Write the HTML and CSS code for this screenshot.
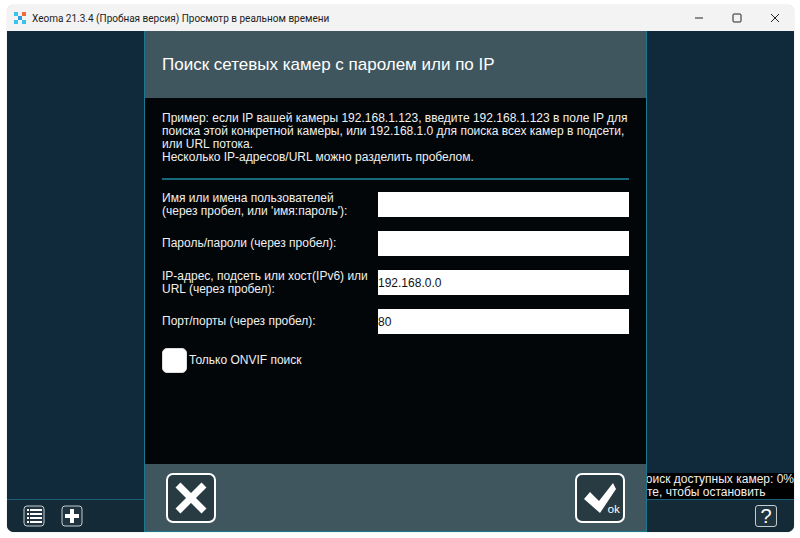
FILE: index.html
```html
<!DOCTYPE html>
<html lang="ru">
<head>
    <meta charset="UTF-8">
    <meta name="viewport" content="width=device-width, initial-scale=1.0">
    <title>Xeoma</title>
    <link rel="stylesheet" href="styles.css">
</head>
<body>
    <div class="window">
        <div class="titlebar">
            <svg class="logo" viewBox="0 0 12 12">
                <path fill="#35c4f0" d="M0 0h4v4h-4zM0 8h4v4h-4zM8 8h4v4h-4z"/>
                <path fill="#ef6a3a" d="M8 0h4v4h-4z"/>
                <path fill="#2a9fdc" d="M4 4h4v4h-4z"/>
            </svg>
            <span class="caption">Xeoma 21.3.4 (Пробная версия) Просмотр в реальном времени</span>
            <button class="win-btn" aria-label="Свернуть">
                <svg viewBox="0 0 10 10"><path d="M1 5h8"/></svg>
            </button>
            <button class="win-btn" aria-label="Развернуть">
                <svg viewBox="0 0 10 10"><rect x="1" y="1" width="8" height="8" rx="1"/></svg>
            </button>
            <button class="win-btn" aria-label="Закрыть">
                <svg viewBox="0 0 10 10"><path d="M1 1l8 8M9 1l-8 8"/></svg>
            </button>
        </div>

        <div class="main">
            <div class="view">
                <p class="status">Идет поиск доступных камер: 0%<br>Нажмите, чтобы остановить</p>
            </div>
            <div class="toolbar">
                <button class="tool" aria-label="Список">
                    <svg viewBox="0 0 22 22">
                        <rect class="frame" x="1" y="1" width="20" height="20" rx="3"/>
                        <path fill="#fff" d="M4 4h2v2h-2zM7 4h12v2h-12zM4 8h2v2h-2zM7 8h12v2h-12zM4 12h2v2h-2zM7 12h12v2h-12zM4 16h2v2h-2zM7 16h12v2h-12z"/>
                    </svg>
                </button>
                <button class="tool" aria-label="Добавить">
                    <svg viewBox="0 0 22 22">
                        <rect class="frame" x="1" y="1" width="20" height="20" rx="3"/>
                        <path fill="#fff" d="M9 4h4v5h5v4h-5v5h-4v-5h-5v-4h5z"/>
                    </svg>
                </button>
                <button class="tool help" aria-label="Справка">?</button>
            </div>

            <div class="overlay">
                <form class="dialog">
                    <h1>Поиск сетевых камер с паролем или по IP</h1>
                    <div class="content">
                        <p class="hint">Пример: если IP вашей камеры 192.168.1.123, введите 192.168.1.123 в поле IP для поиска этой конкретной камеры, или 192.168.1.0 для поиска всех камер в подсети, или URL потока.<br>Несколько IP-адресов/URL можно разделить пробелом.</p>
                        <div class="row">
                            <label for="users">Имя или имена пользователей (через пробел, или 'имя:пароль'):</label>
                            <input type="text" id="users">
                        </div>
                        <div class="row">
                            <label for="passwords">Пароль/пароли (через пробел):</label>
                            <input type="text" id="passwords">
                        </div>
                        <div class="row">
                            <label for="address">IP-адрес, подсеть или хост(IPv6) или URL (через пробел):</label>
                            <input type="text" id="address" value="192.168.0.0">
                        </div>
                        <div class="row">
                            <label for="ports">Порт/порты (через пробел):</label>
                            <input type="text" id="ports" value="80">
                        </div>
                        <div class="check">
                            <input type="checkbox" id="onvif">
                            <label for="onvif">Только ONVIF поиск</label>
                        </div>
                    </div>
                    <div class="actions">
                        <button type="button" class="action" aria-label="Отмена">
                            <svg viewBox="0 0 46 46"><path stroke="#fff" stroke-width="7" d="M10 10l26 26M36 10l-26 26"/></svg>
                        </button>
                        <button type="button" class="action">
                            <svg viewBox="0 0 46 46"><path fill="#fff" d="M7 24l6-7 9 9L36 8l3 6L23 38z"/></svg>
                            <span>ok</span>
                        </button>
                    </div>
                </form>
            </div>
        </div>
    </div>
</body>
</html>
```

FILE: styles.css
```css
* {
    box-sizing: border-box;
}
body {
    margin: 0;
    padding: 5px 6px 6px 7px;
    height: 100vh;
    background: #fff;
    font-family: "Liberation Sans", Arial, sans-serif;
    font-size: 12px;
    line-height: 13px;
    color: #f0f0f0;
}
h1, p {
    margin: 0;
}
button {
    padding: 0;
    border: 0;
    background: none;
    font-family: inherit;
    color: #fff;
}
svg {
    display: block;
    fill: none;
}

/* Window */
.window {
    display: flex;
    flex-direction: column;
    height: 100%;
    border-radius: 7px;
    overflow: hidden;
    box-shadow: 0 0 1px #999;
}
.titlebar {
    display: flex;
    align-items: center;
    height: 26px;
    padding-left: 7px;
    background: #f3f3f3;
    color: #1c1c1c;
    font-family: Roboto, sans-serif;
    font-size: 10px;
}
.logo {
    width: 12px;
    height: 12px;
    margin-right: 6px;
}
.caption {
    flex: 1;
    white-space: nowrap;
}
.win-btn {
    display: flex;
    justify-content: center;
    width: 38px;
}
.win-btn svg {
    width: 10px;
    height: 10px;
    stroke: #222;
}

/* Live view */
.main {
    flex: 1;
    position: relative;
    display: flex;
    flex-direction: column;
    background: #10293b;
}
.view {
    flex: 1;
    display: flex;
    justify-content: flex-end;
    align-items: flex-end;
}
.status {
    background: #000;
}
.toolbar {
    display: flex;
    align-items: center;
    gap: 16px;
    height: 33px;
    padding: 0 17px 0 16px;
    border-top: 1px solid #1b5f78;
    background: #142a37;
}
.tool {
    width: 22px;
    height: 22px;
}
.frame {
    fill: #20343f;
    stroke: #c3ccd1;
}
.help {
    margin-left: auto;
    border: 1px solid #c3ccd1;
    border-radius: 3px;
    background: #20343f;
    font-size: 20px;
    line-height: 20px;
}

/* Search dialog */
.overlay {
    position: absolute;
    inset: 0;
    display: flex;
    justify-content: center;
    padding-right: 10px;
}
.dialog {
    display: flex;
    flex-direction: column;
    width: 100%;
    max-width: 503px;
    border: 1px solid #1b7890;
    border-top: 0;
    background: #030609;
}
.dialog h1 {
    padding: 24px 17px;
    background: #3f565e;
    font-size: 17px;
    line-height: 19px;
    font-weight: normal;
    color: #fff;
}
.content {
    flex: 1;
    padding: 14px 17px 0;
}
.hint {
    padding-bottom: 14px;
    margin-bottom: 5px;
    border-bottom: 2px solid #15697a;
}
.row {
    display: flex;
    align-items: center;
    height: 39px;
}
.row label {
    flex: 1;
    padding-right: 10px;
}
.row input {
    width: 251px;
    height: 25px;
    padding: 0;
    border: 0;
    background: #fff;
    font: inherit;
    color: #111;
}
.check {
    display: flex;
    align-items: center;
    gap: 2px;
    height: 38px;
}
.check input {
    appearance: none;
    width: 25px;
    height: 25px;
    margin: 0;
    border: 1px solid #ddd;
    border-radius: 5px;
    background: #fff;
}
.actions {
    display: flex;
    justify-content: space-between;
    align-items: center;
    height: 67px;
    padding: 0 21px;
    background: #3f565e;
}
.action {
    position: relative;
    width: 50px;
    height: 50px;
    border: 2px solid #fff;
    border-radius: 7px;
    background: #293b42;
}
.action span {
    position: absolute;
    right: 3px;
    bottom: 6px;
    font-family: "Noto Sans", sans-serif;
    font-size: 11px;
    line-height: 12px;
}
```
